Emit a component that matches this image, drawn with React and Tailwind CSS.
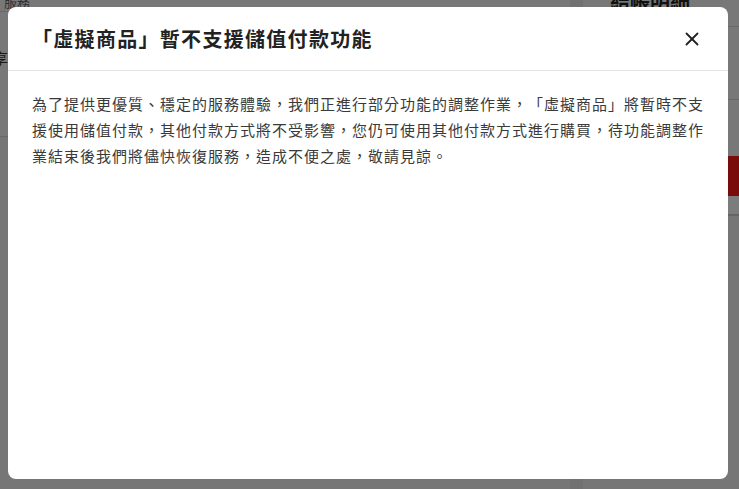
import { X } from "lucide-react";

// page behind the dialog, drawn with the backdrop's dimming already applied
const DimmedPage = () => {
  return (
    <div className="flex h-[489px] w-[739px] overflow-hidden bg-[#787878] font-['Noto_Sans_CJK_TC',sans-serif] text-[#181818]">
      <div className="flex w-[570px] flex-col">
        <div className="-mt-[9px] h-[21px] border-b border-[#686868] px-1 text-[13px] leading-[21px] text-[#303030]">
          服務
        </div>
        <div className="h-[125px] border-b border-[#686868] pt-[36px] text-[15px] leading-[20px]">
          <span className="-ml-[7px]">享</span>
        </div>
        <div className="flex-1 bg-[#767676]" />
      </div>
      <div className="w-[13px] bg-[#717171]" />
      <div className="flex flex-1 flex-col">
        <div className="-mt-[14px] h-[41px] border-b border-[#686868] pl-[27px] text-[20px] font-bold leading-[30px] text-[#101010]">
          結帳明細
        </div>
        <div className="h-[73px] border-b border-[#686868]" />
        <div className="h-[56px]" />
        <div className="ml-4 h-[40px] bg-[#7a0b0b]" />
        <div className="h-[18px] bg-[#7c7c7c]" />
        <div className="h-[2px] bg-[#646464]" />
        <div className="flex-1 bg-[#767676]" />
      </div>
    </div>
  );
};

const NoticeModal = () => {
  return (
    <div className="absolute inset-0 z-10 pl-[8px] pt-[7px]">
      <div className="flex h-[472px] w-[720px] flex-col overflow-hidden rounded-lg bg-white font-['Noto_Sans_CJK_TC',sans-serif] [text-spacing-trim:space-all]">
        <div className="flex h-[64px] items-center justify-between border-b border-[#e3e3e3] px-6">
          <h2 className="text-[20px] font-bold tracking-[1.3px] text-[#222]">
            「虛擬商品」暫不支援儲值付款功能
          </h2>
          <button className="flex h-6 w-6 items-center justify-center text-[#222]">
            <X size={22} strokeWidth={2} />
          </button>
        </div>
        <div className="px-6 pt-[20px]">
          <p className="text-[15px] leading-[26px] tracking-[1px] text-[#3a3a3a]">
            為了提供更優質、穩定的服務體驗，我們正進行部分功能的調整作業，「虛擬商品」將暫時不支援使用儲值付款，其他付款方式將不受影響，您仍可使用其他付款方式進行購買，待功能調整作業結束後我們將儘快恢復服務，造成不便之處，敬請見諒。
          </p>
        </div>
      </div>
    </div>
  );
};

export default function App() {
  return (
    <div className="relative h-[489px] w-[739px] bg-[#787878]">
      <DimmedPage />
      <NoticeModal />
    </div>
  );
}
